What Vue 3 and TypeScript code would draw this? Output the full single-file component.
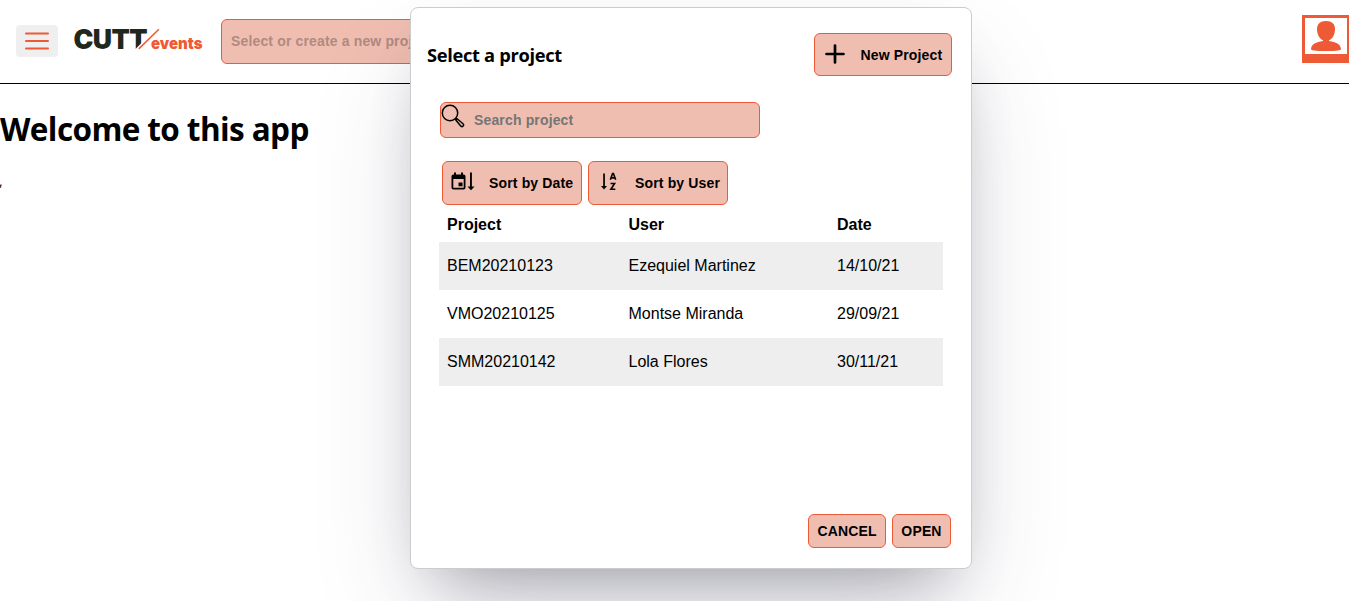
<script setup lang="ts">
interface Project {
  name: string
  user: string
  date: string
}

const projects: Project[] = [
  { name: 'BEM20210123', user: 'Ezequiel Martinez', date: '14/10/21' },
  { name: 'VMO20210125', user: 'Montse Miranda', date: '29/09/21' },
  { name: 'SMM20210142', user: 'Lola Flores', date: '30/11/21' },
]
</script>

<template>
  <div class="page">
    <header class="topbar">
      <button class="menu" aria-label="Menu">
        <svg width="26" height="20" viewBox="0 0 26 20">
          <path d="M2 2.4H24M2 10H24M2 17.6H24" stroke="#ee5a35" stroke-width="2" stroke-linecap="round" />
        </svg>
      </button>
      <svg class="logo" width="132" height="40" viewBox="0 -5 132 40">
        <text class="logo-main" x="-0.5" y="23.7" textLength="73.500" lengthAdjust="spacingAndGlyphs">CUTT</text>
        <path d="M58.500 27L81.500 4L92 5L76 27Z" fill="#fff" />
        <path d="M64.800 23.900L84.900 4.200" stroke="#ee5a35" stroke-width="1.5" />
        <text class="logo-sub" x="77" y="23.500" textLength="51.500" lengthAdjust="spacingAndGlyphs">events</text>
      </svg>
      <input class="field project-field" placeholder="Select or create a new project" />
      <div class="avatar">
        <svg width="42" height="36" viewBox="0 0 42 36">
          <path
            d="M21 3C15 3 12 6 12 11C12 16 14 20.5 18 22.2V23C11 24 6.500 26 6 31C6 32.500 10 33 21 33S36 32.500 36 31C35.500 26 31 24 24 23V22.200C28 20.500 30 16 30 11C30 6 27 3 21 3Z"
            fill="#ee5a35"
          />
        </svg>
      </div>
    </header>
    <h1>Welcome to this app</h1>
    <p class="note">,</p>

    <section class="modal" role="dialog">
      <div class="modal-head">
        <h3>Select a project</h3>
        <button class="btn new-btn">
          <svg width="20" height="20" viewBox="0 0 20 20">
            <path d="M10 1.500V18.500M1.500 10H18.500" stroke="#000" stroke-width="2.700" stroke-linecap="round" />
          </svg>
          <span>New Project</span>
        </button>
      </div>

      <div class="field search">
        <svg width="24" height="24" viewBox="0 0 24 24" fill="none" stroke="#000" stroke-width="1.500">
          <circle cx="9" cy="9" r="7.700" />
          <path d="M14.300 14.800L16 16.200" />
          <path d="M16.100 14.800L22 19.800C23.500 21.300 21.500 23.500 19.900 22.200L15 16.200C14.500 15.400 15.400 14.300 16.100 14.800Z" />
        </svg>
        <input placeholder="Search project" />
      </div>

      <div class="sorts">
        <button class="btn sort-btn">
          <svg width="24" height="22" viewBox="0 0 24 22">
            <path
              fill-rule="evenodd"
              d="M3 1.500V3.500H2.500C1.300 3.500 0.500 4.300 0.500 5.500V16.500C0.500 17.800 1.300 18.500 2.500 18.500H12.500C13.800 18.500 14.500 17.800 14.500 16.500V5.500C14.500 4.300 13.800 3.500 12.500 3.500H12V1.500H10V3.500H5V1.500ZM2.300 8H12.700V16.700H2.300ZM7.500 11.500V15.300H11.500V11.500Z"
            />
            <path d="M19 1.500H20.900V15.500H23.500L20 19.300L16.500 15.500H19Z" />
          </svg>
          <span>Sort by Date</span>
        </button>
        <button class="btn sort-btn">
          <svg width="24" height="22" viewBox="0 0 24 22">
            <path d="M6.200 2.500H7.900V15H10L7 18.500L4 15H6.200Z" />
            <path d="M13.300 8.800L15.600 2.500H16.400L18.700 8.800M14.200 6.900H17.800" fill="none" stroke="#000" stroke-width="1.600" />
            <path d="M13.500 12.500H17.600L13.900 18.200H18.300" fill="none" stroke="#000" stroke-width="1.600" />
          </svg>
          <span>Sort by User</span>
        </button>
      </div>

      <table>
        <thead>
          <tr><th class="c1">Project</th><th class="c2">User</th><th>Date</th></tr>
        </thead>
        <tbody>
          <tr v-for="p in projects" :key="p.name">
            <td>{{ p.name }}</td><td>{{ p.user }}</td><td>{{ p.date }}</td>
          </tr>
        </tbody>
      </table>

      <footer class="actions">
        <button class="btn cancel">CANCEL</button>
        <button class="btn open">OPEN</button>
      </footer>
    </section>
  </div>
</template>

<style>
body {
  margin: 0;
  background: #fff;
  overflow: hidden;
}
</style>

<style scoped>
.page {
  position: relative;
  height: 601px;
  overflow: hidden;
  color: #000;
  font-family: 'Liberation Sans', Arial, sans-serif;
}
.page * {
  box-sizing: border-box;
}
.topbar {
  display: flex;
  align-items: center;
  height: 84px;
  padding-left: 16px;
  border-bottom: 1px solid #000;
}
.menu {
  display: flex;
  align-items: center;
  justify-content: center;
  width: 42px;
  height: 32px;
  margin-bottom: 1px;
  padding: 0;
  border: 0;
  border-radius: 4px;
  background: #efefef;
}
.logo {
  margin: 0 0 3px 15.500px;
  overflow: visible;
}
.logo-main {
  font: 900 27.500px Inter, sans-serif;
  letter-spacing: -0.600px;
  fill: #20281c;
}
.logo-sub {
  font: 900 16px Inter, sans-serif;
  fill: #ee5a35;
}
.field {
  border: 1px solid #ee5a35;
  border-radius: 6px;
  background: #f0beb1;
}
.project-field {
  width: 320px;
  height: 45px;
  margin-left: 15.500px;
  padding: 0 9px 2px;
  font: bold 14px 'Liberation Sans', Arial, sans-serif;
  letter-spacing: 0.150px;
}
.project-field::placeholder {
  color: #b18a81;
  opacity: 1;
}
.avatar {
  width: 47px;
  height: 48px;
  margin: 0 0 5px auto;
  padding: 3px 2px 0 3px;
  background: #ee5a35;
}
.avatar svg {
  display: block;
  background: #fff;
}
h1 {
  margin: 22px 0 0;
  font: bold 31.500px/46px 'Open Sans', 'Noto Sans', sans-serif;
  letter-spacing: -0.600px;
}
.note {
  margin: 19px 0 0 -1px;
  font: 14px/20px 'Open Sans', sans-serif;
}
.modal {
  position: absolute;
  top: 7px;
  left: 410px;
  display: flex;
  flex-direction: column;
  width: 562px;
  height: 562px;
  padding: 25px 19px 20px 16px;
  border: 1px solid #ccc;
  border-radius: 8px;
  background: #fff;
  box-shadow:
    rgba(50, 50, 93, 0.25) 0 50px 100px -20px,
    rgba(0, 0, 0, 0.3) 0 30px 60px -30px;
}
.modal-head {
  display: flex;
  justify-content: space-between;
  height: 43px;
}
h3 {
  margin: 0;
  font: bold 18.300px/44px 'Open Sans', 'Noto Sans', sans-serif;
  letter-spacing: -0.320px;
}
.btn {
  display: flex;
  align-items: center;
  justify-content: center;
  padding: 0;
  border: 1px solid #ee5a35;
  border-radius: 6px;
  background: #f0beb1;
  color: #000;
  font: bold 14px 'Liberation Sans', Arial, sans-serif;
  letter-spacing: 0.150px;
  white-space: nowrap;
}
.new-btn {
  justify-content: flex-start;
  width: 138px;
  height: 43px;
  padding-left: 9.500px;
  gap: 16px;
}
.new-btn svg {
  margin-bottom: 2px;
}
.search {
  display: flex;
  width: 320px;
  height: 36px;
  margin: 26px 0 0 13px;
}
.search svg {
  flex: none;
  margin: 1px 0 0 0;
}
.search input {
  flex: 1;
  min-width: 0;
  padding: 0 0 0 9px;
  border: 0;
  background: none;
  font: bold 14px 'Liberation Sans', Arial, sans-serif;
  letter-spacing: 0.150px;
}
.search input::placeholder {
  color: #757575;
}
.sorts {
  display: flex;
  gap: 6px;
  margin: 23px 0 0 15px;
}
.sort-btn {
  justify-content: flex-start;
  width: 140px;
  height: 44px;
  padding-left: 8px;
  gap: 14px;
}
.sort-btn svg {
  margin-bottom: 3px;
}
table {
  width: 504px;
  margin: 2px 0 0 12px;
  border-collapse: collapse;
  table-layout: fixed;
  font-size: 16px;
  text-align: left;
}
th,
td {
  padding: 0 8px;
}
th {
  height: 35px;
}
td {
  height: 48px;
}
.c1 {
  width: 181.500px;
}
.c2 {
  width: 208.500px;
}
tbody tr:nth-child(odd) {
  background: #eee;
}
.actions {
  display: flex;
  justify-content: flex-end;
  gap: 6px;
  margin: auto 1px 0 0;
}
.cancel {
  width: 78px;
  height: 34px;
}
.open {
  width: 59px;
  height: 34px;
}
</style>
